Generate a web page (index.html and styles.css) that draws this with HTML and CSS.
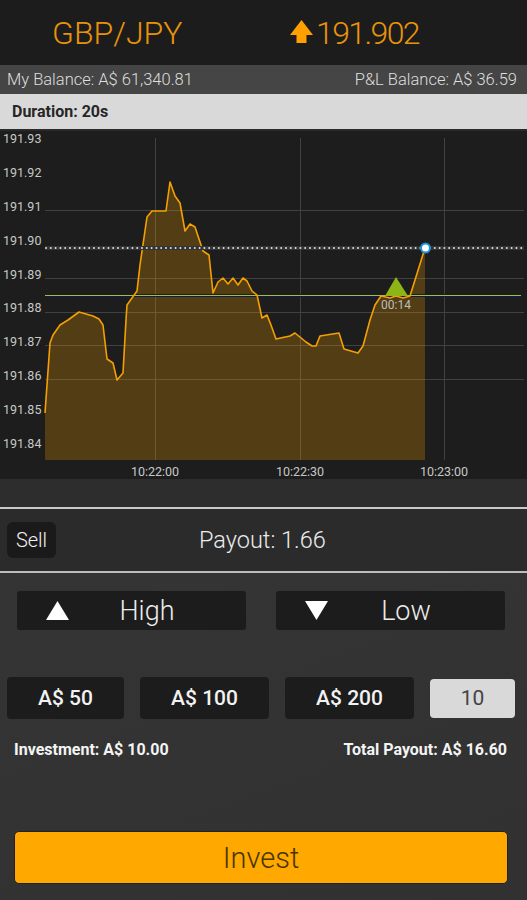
FILE: index.html
```html
<!DOCTYPE html>
<html lang="en">
<head>
    <meta charset="UTF-8">
    <meta name="viewport" content="width=device-width, initial-scale=1.0">
    <title>GBP/JPY Trade</title>
    <link rel="stylesheet" href="styles.css">
</head>
<body>
    <div class="app">
        <header class="quote">
            <span class="pair">GBP/JPY</span>
            <span class="price">
                <svg class="price-arrow" width="23" height="24" viewBox="0 0 23 24">
                    <path d="M11.5 0 L23 15 L16.5 15 L16.5 23 L6.5 23 L6.5 15 L0 15 Z" fill="#ffa000"/>
                </svg>
                191.902
            </span>
        </header>

        <div class="balances">
            <span>My Balance: A$ 61,340.81</span>
            <span>P&amp;L Balance: A$ 36.59</span>
        </div>

        <div class="duration">Duration: 20s</div>

        <div class="chart">
            <svg width="527" height="348" viewBox="0 131 527 348">
                <!-- grid -->
                <g stroke="#404140" stroke-width="1">
                    <line x1="45" y1="210.5" x2="524" y2="210.5"/>
                    <line x1="45" y1="278.5" x2="524" y2="278.5"/>
                    <line x1="45" y1="312.5" x2="524" y2="312.5"/>
                    <line x1="45" y1="345.5" x2="524" y2="345.5"/>
                    <line x1="45" y1="379.5" x2="524" y2="379.5"/>
                    <line x1="155.5" y1="138" x2="155.5" y2="460"/>
                    <line x1="300.5" y1="138" x2="300.5" y2="460"/>
                    <line x1="444.5" y1="138" x2="444.5" y2="460"/>
                </g>

                <g class="axis-label">
                    <text x="3" y="143">191.93</text>
                    <text x="3" y="177">191.92</text>
                    <text x="3" y="211">191.91</text>
                    <text x="3" y="245">191.90</text>
                    <text x="3" y="279">191.89</text>
                    <text x="3" y="312">191.88</text>
                    <text x="3" y="346">191.87</text>
                    <text x="3" y="380">191.86</text>
                    <text x="3" y="414">191.85</text>
                    <text x="3" y="448">191.84</text>
                    <text x="155" y="476" text-anchor="middle">10:22:00</text>
                    <text x="300" y="476" text-anchor="middle">10:22:30</text>
                    <text x="444" y="476" text-anchor="middle">10:23:00</text>
                </g>

                <!-- price area -->
                <polygon fill="#f5a000" fill-opacity="0.25" points="45,413 50,343 53,335 60,325 68,320 79,312 93,316 99,319 103,325 107,359 113,363 117,380 123,373 126,320 127,305 137,291 140,265 147,217 152,211 166,211 170,182 175,196 180,203 185,231 190,224 195,227 203,251 209,255 213,293 218,282 223,278 228,284 233,278 238,285 243,278 247,281 252,291 257,295 262,318 267,315 271,325 276,339 290,336 295,333 306,342 312,346 316,346 320,336 339,333 344,349 358,353 363,346 370,320 375,305 381,296 390,298 396,296 403,298 410,296 425,248 425,460 45,460"/>

                <!-- strike line -->
                <line x1="45" y1="295.5" x2="521" y2="295.5" stroke="#141a45" stroke-width="3"/>
                <line x1="45" y1="295.5" x2="521" y2="295.5" stroke="#a6c41a" stroke-width="1"/>

                <polyline fill="none" stroke="#f5a000" stroke-width="1.6" stroke-linejoin="round" points="45,413 50,343 53,335 60,325 68,320 79,312 93,316 99,319 103,325 107,359 113,363 117,380 123,373 126,320 127,305 137,291 140,265 147,217 152,211 166,211 170,182 175,196 180,203 185,231 190,224 195,227 203,251 209,255 213,293 218,282 223,278 228,284 233,278 238,285 243,278 247,281 252,291 257,295 262,318 267,315 271,325 276,339 290,336 295,333 306,342 312,346 316,346 320,336 339,333 344,349 358,353 363,346 370,320 375,305 381,296 390,298 396,296 403,298 410,296 425,248"/>

                <!-- entry marker -->
                <polygon points="396,277 385,296 408,296" fill="#8db516"/>
                <text class="timer" x="396" y="309" text-anchor="middle">00:14</text>

                <!-- current price -->
                <line x1="45" y1="248" x2="524" y2="248" stroke="#333433" stroke-width="4"/>
                <line x1="46" y1="248" x2="524" y2="248" stroke="#dddddd" stroke-width="2" stroke-linecap="round" stroke-dasharray="0 4.8"/>
                <circle cx="425.5" cy="248" r="4.5" fill="#ffffff" stroke="#1a8ee0" stroke-width="2"/>
            </svg>
        </div>

        <div class="chart-foot"></div>

        <div class="payout-row">
            <button class="sell-btn">Sell</button>
            <div class="payout">Payout: 1.66</div>
        </div>

        <div class="direction">
            <button class="dir-btn">
                <svg width="23" height="20" viewBox="0 0 23 20"><path d="M11.5 0 L23 19 L0 19 Z" fill="#fff"/></svg>
                <span class="dir-label">High</span>
            </button>
            <button class="dir-btn">
                <svg width="23" height="20" viewBox="0 0 23 20"><path d="M0 0 L23 0 L11.5 19 Z" fill="#fff"/></svg>
                <span class="dir-label">Low</span>
            </button>
        </div>

        <div class="amounts">
            <button class="amount-btn">A$ 50</button>
            <button class="amount-btn">A$ 100</button>
            <button class="amount-btn">A$ 200</button>
            <div class="amount-input">10</div>
        </div>

        <div class="totals">
            <span>Investment: A$ 10.00</span>
            <span>Total Payout: A$ 16.60</span>
        </div>

        <button class="invest-btn">Invest</button>
    </div>
</body>
</html>
```

FILE: styles.css
```css
body {
    margin: 0;
    padding: 0;
    background: #323232;
    font-family: 'Roboto', sans-serif;
    color: #e6e6e6;
}

.app {
    width: 527px;
    height: 900px;
    background: linear-gradient(160deg, #2f2f2f 0%, #343434 60%, #313131 100%);
}

button {
    font-family: 'Roboto', sans-serif;
    border: none;
    cursor: pointer;
}

.quote {
    height: 65px;
    background: #1c1c1c;
    display: flex;
    align-items: center;
    padding-left: 52px;
    color: #e8940a;
    font-weight: 300;
    font-size: 32px;
}

.pair {
    width: 238px;
}

.price {
    display: flex;
    align-items: center;
    letter-spacing: -1.6px;
}

.price-arrow {
    margin-right: 3px;
    margin-top: -2px;
}

.balances {
    height: 29px;
    background: #454545;
    display: flex;
    justify-content: space-between;
    align-items: center;
    padding: 0 10px 0 7px;
    font-size: 16.5px;
    font-weight: 300;
    color: #dedede;
}

.duration {
    height: 35px;
    background: #d9d9d9;
    border-bottom: 2px solid #2a2a2a;
    display: flex;
    align-items: center;
    padding-left: 12px;
    font-size: 16px;
    font-weight: 700;
    color: #262626;
}

.chart {
    height: 348px;
    background: #1c1d1c;
}

.chart svg {
    display: block;
}

.axis-label text {
    font-family: 'Roboto', sans-serif;
    font-size: 12.5px;
    fill: #c8c8c8;
}

.timer {
    font-family: 'Roboto', sans-serif;
    font-size: 12px;
    fill: #bdbdbd;
}

.chart-foot {
    height: 28px;
    background: #2d2d2d;
}

.payout-row {
    height: 62px;
    border-top: 2px solid #c9c9c9;
    border-bottom: 2px solid #bdbdbd;
    background: #2b2b2b;
    display: flex;
    align-items: center;
    padding-left: 7px;
}

.sell-btn {
    width: 49px;
    height: 36px;
    background: #1a1a1a;
    border-radius: 6px;
    color: #f0f0f0;
    font-size: 20px;
    font-weight: 300;
    padding: 0;
}

.payout {
    margin-left: 143px;
    font-size: 23.5px;
    font-weight: 300;
    color: #ececec;
}

.direction {
    display: grid;
    grid-template-columns: 229px 229px;
    column-gap: 30px;
    padding-left: 17px;
    margin-top: 18px;
}

.dir-btn {
    height: 39px;
    background: #1c1c1c;
    border-radius: 3px;
    display: flex;
    align-items: center;
    padding: 0 21px 0 29px;
    color: #ececec;
}

.dir-label {
    flex: 1;
    text-align: center;
    font-size: 27px;
    font-weight: 300;
}

.amounts {
    display: grid;
    grid-template-columns: 117px 129px 129px 85px;
    column-gap: 16px;
    align-items: center;
    padding-left: 7px;
    margin-top: 47px;
}

.amount-btn {
    height: 42px;
    background: #1c1c1c;
    border-radius: 4px;
    color: #f2f2f2;
    font-size: 21px;
    font-weight: 500;
}

.amount-input {
    height: 39px;
    background: #d9d9d9;
    border-radius: 4px;
    display: flex;
    align-items: center;
    justify-content: center;
    font-size: 21px;
    color: #444;
}

.totals {
    display: flex;
    justify-content: space-between;
    padding: 0 20px 0 14px;
    margin-top: 21px;
    font-size: 16px;
    font-weight: 700;
    color: #f4f4f4;
}

.invest-btn {
    display: block;
    width: 494px;
    height: 53px;
    margin: 72px 0 0 14px;
    background: #ffa800;
    border: 1px solid #222;
    border-radius: 5px;
    color: #4a3500;
    font-size: 29px;
    font-weight: 300;
}
```
